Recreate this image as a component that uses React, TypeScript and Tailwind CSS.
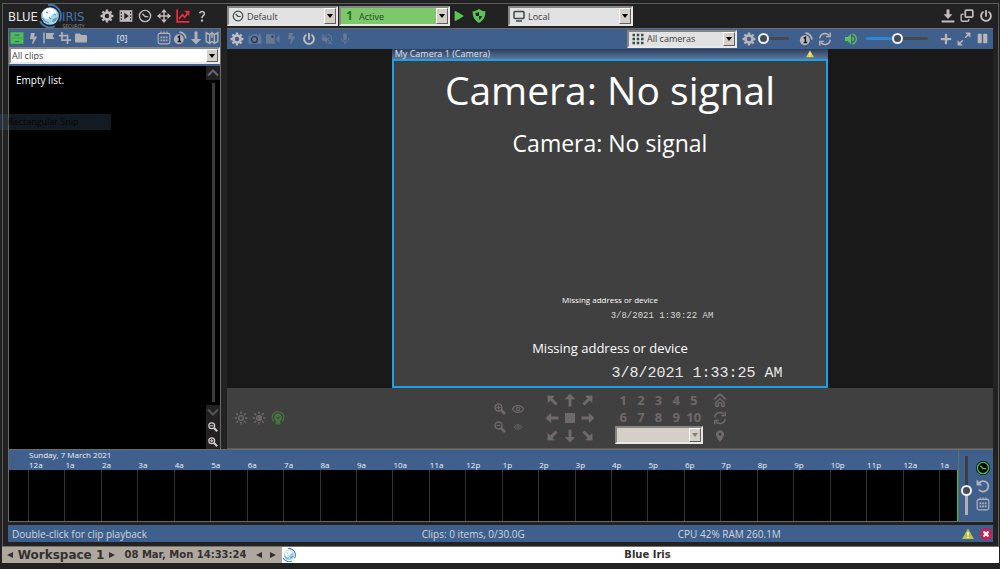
import React, { useState } from 'react';
import clsx from 'clsx';
import {
  FaBolt,
  FaFolder,
  FaPause,
  FaPlay,
  FaPlus,
  FaPowerOff,
} from 'react-icons/fa';
import {
  MdLocationOn,
  MdMic,
  MdQuestionMark,
  MdVolumeOff,
  MdVolumeUp,
} from 'react-icons/md';

interface IconButtonProps {
  label: string;
  className?: string;
  children: React.ReactNode;
}

interface PickerProps {
  label: string;
  options: string[];
  icon?: React.ReactNode;
  className?: string;
  fieldClass?: string;
  arrowClass?: string;
}

const HOURS = [
  '12a', '1a', '2a', '3a', '4a', '5a', '6a', '7a', '8a', '9a', '10a', '11a',
  '12p', '1p', '2p', '3p', '4p', '5p', '6p', '7p', '8p', '9p', '10p', '11p',
  '12a', '1a',
];

const PTZ = [
  { label: 'Up left', angle: -45 },
  { label: 'Up', angle: 0 },
  { label: 'Up right', angle: 45 },
  { label: 'Left', angle: -90 },
  { label: 'Stop', angle: null },
  { label: 'Right', angle: 90 },
  { label: 'Down left', angle: -135 },
  { label: 'Down', angle: 180 },
  { label: 'Down right', angle: 135 },
];

/* ---------- Icons ---------- */

const Svg = ({ children, className = 'w-3.5 h-3.5' }: { children: React.ReactNode; className?: string }) => (
  <svg viewBox="0 0 24 24" className={className} fill="none" stroke="currentColor" strokeWidth="2.4">
    {children}
  </svg>
);

const GearIcon = () => (
  <Svg>
    <circle cx="12" cy="12" r="6" strokeWidth="4.500" />
    <path
      d="M12 1v4M12 19v4M1 12h4M19 12h4M4.200 4.200L7 7M17 17l2.800 2.800M19.800 4.200L17 7M7 17l-2.800 2.800"
      strokeWidth="4"
    />
  </Svg>
);

const FilmIcon = () => (
  <Svg>
    <path
      fill="currentColor"
      stroke="none"
      fillRule="evenodd"
      d="M1 2h22v20H1zM3 5v3h2V5zm0 5.500v3h2v-3zM3 16v3h2v-3zM19 5v3h2V5zm0 5.500v3h2v-3zm0 5.500v3h2v-3zM9 6.500v11l8-5.500z"
    />
  </Svg>
);

const ClockIcon = ({ className }: { className?: string }) => (
  <Svg className={className}>
    <circle cx="12" cy="12" r="9.6" />
    <path d="M7.500 8l4.500 5h5.500" />
  </Svg>
);

const MoveIcon = () => (
  <Svg>
    <path d="M12 4v16M4 12h16" />
    <path fill="currentColor" stroke="none" d="M12 0l5 6H7zM12 24l5-6H7zM0 12l6-5v10zM24 12l-6-5v10z" />
  </Svg>
);

const ChartIcon = () => (
  <Svg>
    <path d="M2 1v21h21" strokeWidth="3" />
    <path d="M5 17l6-7 4 4 6-8" strokeWidth="3" />
    <path fill="currentColor" stroke="none" d="M14 3h9v9z" />
  </Svg>
);

const DrawerIcon = () => (
  <Svg>
    <path fill="currentColor" stroke="none" fillRule="evenodd" d="M1 2h22v9H1zM1 13h22v9H1zM8 6v2h8V6zm0 11v2h8v-2z" />
    <path d="M0 12h24" strokeWidth="2" />
  </Svg>
);

const FlagIcon = () => (
  <Svg className="h-3 w-3">
    <path d="M2 1v22" strokeWidth="3" />
    <path fill="currentColor" stroke="none" d="M6 2h17l-4 6 4 6H6z" />
  </Svg>
);

const CropIcon = () => (
  <Svg className="h-3 w-3">
    <path d="M6 0v16h18M0 7h17v17" strokeWidth="3.500" />
  </Svg>
);

const CalendarIcon = () => (
  <Svg>
    <rect x="2" y="4" width="20" height="18" rx="3" strokeWidth="2" />
    <path d="M7 1v4M12 1v4M17 1v4" strokeWidth="2" />
    <path d="M6 11h12M6 16h12" strokeWidth="3" strokeDasharray="3 1.500" />
  </Svg>
);

const AlertCountIcon = () => (
  <Svg>
    <circle cx="10" cy="14" r="8.500" fill="currentColor" stroke="none" />
    <path d="M11 2a11 11 0 0 1 11 11" strokeWidth="3" />
    <path d="M8 11l3-2v9M8 18h6" stroke="#111827" />
  </Svg>
);

const MapIcon = () => (
  <Svg>
    <path d="M2 3l6 3v15l-6-3zM22 3l-6 3v15l6-3zM8 6l4-3M16 6l-4-3v9M8 21l4-3 4 3" />
  </Svg>
);

const CameraIcon = () => (
  <Svg>
    <path fill="currentColor" stroke="none" d="M1 7h4l3-3h7l2 3h6v13H1z" />
    <circle cx="11" cy="13" r="5" stroke="#24385a" />
    <circle cx="20" cy="5" r="2" fill="currentColor" stroke="none" />
  </Svg>
);

const VideoIcon = () => (
  <Svg>
    <path fill="currentColor" stroke="none" d="M0 4h15v16H0zM17 12l6-7v14z" />
    <circle cx="11" cy="8" r="2" fill="#24385a" stroke="none" />
  </Svg>
);

const SyncIcon = () => (
  <Svg>
    <path d="M3 11a9 9 0 0 1 16-5M21 13a9 9 0 0 1-16 5" />
    <path d="M21 1v7h-7M3 23v-7h7" />
  </Svg>
);

const ExpandIcon = () => (
  <Svg>
    <path d="M14 10l7-7M10 14l-7 7" />
    <path fill="currentColor" stroke="none" d="M14 1h9v9zM1 14v9h9z" />
  </Svg>
);

const WindowsIcon = () => (
  <Svg>
    <rect x="9" y="2" width="13" height="12" rx="2" strokeWidth="3" />
    <path d="M6 9H4a2 2 0 0 0-2 2v8a2 2 0 0 0 2 2h9a2 2 0 0 0 2-2v-2" />
  </Svg>
);

const DownloadIcon = () => (
  <Svg>
    <path fill="currentColor" stroke="none" d="M9.500 1h5v8h5L12 17 4.500 9h5zM1 19.500h22V23H1z" />
  </Svg>
);

const ShieldIcon = () => (
  <Svg>
    <path
      fill="currentColor"
      stroke="none"
      fillRule="evenodd"
      d="M12 0c4 3 7 4 11 4 0 9-3 16-11 20C4 20 1 13 1 4c4 0 7-1 11-4zM12 5c-2 1-4 2-6 2 0 2 .3 3.500 1 5h5zM12 12v7c3-2 4.500-4 5-7z"
    />
  </Svg>
);

const MonitorIcon = () => (
  <Svg className="w-3 h-3">
    <rect x="2" y="3" width="20" height="14" rx="2" strokeWidth="3" />
    <path d="M6 22h12" strokeWidth="3" />
  </Svg>
);

const GridIcon = () => (
  <Svg className="w-3 h-3">
    <path d="M1 4h24M1 12h24M1 20h24" strokeWidth="5" strokeDasharray="5 3.500" />
  </Svg>
);

const SunIcon = ({ half }: { half?: boolean }) => (
  <Svg>
    <circle cx="12" cy="12" r="4" />
    {half && <path d="M12 8a4 4 0 0 1 0 8z" fill="currentColor" />}
    <path d="M12 1v4M12 19v4M1 12h4M19 12h4M4 4l3 3M17 17l3 3M20 4l-3 3M7 17l-3 3" />
  </Svg>
);

const BulbIcon = () => (
  <Svg className="w-4 h-4">
    <path d="M5 18a10 10 0 1 1 14 0" strokeWidth="2" />
    <path fill="currentColor" stroke="none" d="M12 4a7 7 0 0 1 4 12.500V23H8v-6.500A7 7 0 0 1 12 4z" />
    <path d="M9 10l3 3 3-3" stroke="#33503a" strokeWidth="2" />
  </Svg>
);

const EyeIcon = ({ className = 'w-3.5 h-3.5' }: { className?: string }) => (
  <Svg className={className}>
    <path d="M1 12c4-9 18-9 22 0-4 9-18 9-22 0z" />
    <circle cx="12" cy="12" r="3.500" />
  </Svg>
);

const MagnifierIcon = ({ plus, className = 'h-3 w-3' }: { plus?: boolean; className?: string }) => (
  <Svg className={className}>
    <circle cx="9" cy="9" r="7" strokeWidth="3" />
    <path d="M14 14l8 8" strokeWidth="5" />
    <path d="M5 9h8" strokeWidth="2.500" />
    {plus && <path d="M9 5v8" strokeWidth="2.500" />}
  </Svg>
);

const ArrowIcon = ({ angle }: { angle: number }) => (
  <Svg>
    <g transform={`rotate(${angle} 12 12)`}>
      <path d="M12 1l9 9.500h-6.500V23h-5V10.500H3z" fill="currentColor" stroke="none" />
    </g>
  </Svg>
);

const HomeIcon = () => (
  <Svg>
    <path d="M2 11l10-9 10 9" strokeWidth="3" />
    <path d="M4 17l8-7 8 7M5 15v8h4v-6h6v6h4v-8" />
  </Svg>
);

const UndoIcon = () => (
  <Svg>
    <path d="M5 7a9 9 0 1 1 0 11" strokeWidth="3" />
    <path fill="currentColor" stroke="none" d="M1 1v10h10z" />
  </Svg>
);

const WarningIcon = ({ className, fill = '#b8c43c' }: { className?: string; fill?: string }) => (
  <Svg className={className}>
    <path d="M12 1L24 22H0z" fill={fill} stroke="none" />
    <path d="M12 8v7M12 17v3" stroke="#fff" strokeWidth="3" />
  </Svg>
);

const Orb = ({ className }: { className?: string }) => (
  <svg viewBox="0 0 24 24" className={className}>
    <circle cx="12" cy="12" r="8.800" fill="#a9d6e4" />
    <path d="M5 8c3-5 9-5 13-1 1 3-1 3-3 3s-1 4-4 5-7-2-6-7z" fill="#f2fafb" />
    <path d="M14 18c0-3 3-4 6-5-1 3-3 5-6 5z" fill="#5b9cc2" />
    <path d="M4 14l3 3 4 2M16 10l2 1M8 8l2 1M11 13l2 2" fill="none" stroke="#5b9cc2" strokeWidth="1.200" />
    <path d="M10 .9a11.200 11.200 0 0 1 11.500 16.500M17 22.200a11.200 11.200 0 0 1-15-5" fill="none" stroke="#4676b6" strokeWidth="1.800" />
  </svg>
);

/* ---------- Controls ---------- */

function IconButton({ label, className, children }: IconButtonProps) {
  return (
    <button
      type="button"
      aria-label={label}
      title={label}
      className={clsx('flex h-3.5 w-3.5 shrink-0 items-center justify-center', className)}
    >
      {children}
    </button>
  );
}

function Picker({
  label,
  options,
  icon,
  className,
  fieldClass = 'bg-[#e1e1e1] text-[#3c3c3c]',
  arrowClass = 'text-black',
}: PickerProps) {
  return (
    <div
      className={clsx(
        'relative shrink-0 border-2 border-t-[#858585] border-l-[#858585] border-r-[#e8e8e8] border-b-[#e8e8e8]',
        className
      )}
    >
      <select
        aria-label={label}
        className={clsx('block h-full w-full appearance-none text-[9px] leading-none outline-none', icon ? 'pl-[18px]' : 'pl-px', fieldClass)}
      >
        {options.map((option) => (
          <option key={option}>{option}</option>
        ))}
      </select>
      {icon && <span className="pointer-events-none absolute inset-y-0 left-[3px] flex items-center text-[#3a4a4a]">{icon}</span>}
      <span
        className={clsx(
          'pointer-events-none absolute inset-y-0 right-0 flex w-3 items-center justify-center border border-t-white border-l-white border-r-[#606060] border-b-[#606060] bg-[#d4d0c8]',
          arrowClass
        )}
      >
        <svg viewBox="0 0 6 4" className="h-1 w-1.5" fill="currentColor">
          <path d="M0 0h6L3 4z" />
        </svg>
      </span>
    </div>
  );
}

const rangeBase =
  'appearance-none rounded-sm outline-none [&::-webkit-slider-thumb]:h-[11px] [&::-webkit-slider-thumb]:w-[11px] [&::-webkit-slider-thumb]:appearance-none [&::-webkit-slider-thumb]:rounded-full [&::-webkit-slider-thumb]:border-2 [&::-webkit-slider-thumb]:border-[#f0f0f0] [&::-webkit-slider-thumb]:bg-[#444b55]';

/* ---------- Sections ---------- */

function Logo() {
  return (
    <a
      href="#"
      aria-label="Blue Iris Security"
      className="flex w-[78px] shrink-0 items-center font-['DejaVu_Sans_Condensed','Open_Sans',sans-serif] text-[13px] leading-none"
    >
      <span className="w-[30px] text-[#e6e6e6]">BLUE</span>
      <Orb className="h-6 w-6 shrink-0" />
      <span className="relative text-[#4676b6]">
        IRIS
        <span className="absolute top-3.5 right-0 text-[5px] leading-none text-[#8a8a8a]">SECURITY</span>
      </span>
    </a>
  );
}

function TopBar() {
  return (
    <header className="flex h-6 items-center text-[#c4bcbc]">
      <div className="flex w-[219px] shrink-0 items-center gap-3.5">
        <Logo />
        <nav className="flex items-center gap-[5px]">
          <IconButton label="Settings"><GearIcon /></IconButton>
          <IconButton label="Clips"><FilmIcon /></IconButton>
          <IconButton label="Schedule"><ClockIcon /></IconButton>
          <IconButton label="Move"><MoveIcon /></IconButton>
          <IconButton label="Status" className="text-[#ee2b3b]"><ChartIcon /></IconButton>
          <IconButton label="Help"><MdQuestionMark size={14} /></IconButton>
        </nav>
      </div>
      <Picker label="Schedule" options={['Default']} icon={<ClockIcon className="h-3 w-3" />} className="h-5 w-[111px]" />
      <Picker
        label="Profile"
        options={['Active', 'Inactive']}
        icon={<span className="pl-0.5 text-[12px] font-bold text-[#1d7a1d]">1</span>}
        className="ml-px h-5 w-[111px]"
        fieldClass="bg-[#7cc86a] text-[#234a1d]"
      />
      <div className="ml-0.5 flex items-center gap-1.5 text-[#5ac455]">
        <IconButton label="Run"><FaPlay size={10} /></IconButton>
        <IconButton label="Shield"><ShieldIcon /></IconButton>
      </div>
      <Picker label="Server" options={['Local']} icon={<MonitorIcon />} className="ml-[22px] h-5 w-[125px]" />
      <div className="ml-auto flex items-center gap-[5px]">
        <IconButton label="Minimize"><DownloadIcon /></IconButton>
        <IconButton label="Restore"><WindowsIcon /></IconButton>
        <IconButton label="Exit"><FaPowerOff size={12} /></IconButton>
      </div>
    </header>
  );
}

function ClipsPanel() {
  return (
    <aside className="flex w-[213px] shrink-0 flex-col border border-b-0 border-[#6c6c6c] bg-black">
      <div className="flex h-[18px] items-center bg-[#3f608c] px-px text-[#b3afb3]">
        <div className="flex items-center gap-0.5">
          <IconButton label="All" className="text-[#4cc04f]"><DrawerIcon /></IconButton>
          <IconButton label="Alerts"><FaBolt size={11} /></IconButton>
          <IconButton label="Flagged"><FlagIcon /></IconButton>
          <IconButton label="Cropped"><CropIcon /></IconButton>
          <IconButton label="Folders"><FaFolder size={12} /></IconButton>
        </div>
        <span className="flex-1 pr-px text-center text-[9px] font-semibold text-[#d0d4dc]">[0]</span>
        <div className="flex items-center gap-0.5">
          <IconButton label="Calendar"><CalendarIcon /></IconButton>
          <IconButton label="Count"><AlertCountIcon /></IconButton>
          <IconButton label="Sort"><ArrowIcon angle={180} /></IconButton>
          <IconButton label="Map"><MapIcon /></IconButton>
        </div>
      </div>
      <div className="border-b-2 border-[#3f608c] bg-[#3f608c]">
        <Picker label="Clip filter" options={['All clips']} className="h-[17px]" fieldClass="bg-white text-[#444]" />
      </div>
      <div className="flex flex-1">
        <p className="flex-1 px-[7px] pt-1.5 text-[10px] leading-4 text-white">Empty list.</p>
        <div className="flex w-3.5 flex-col items-center text-[#666]">
          <button type="button" aria-label="Scroll up" className="flex h-3.5 w-full items-center justify-center bg-[#222]">
            <Svg className="h-3 w-3"><path d="M2 17L12 7l10 10" strokeWidth="4" /></Svg>
          </button>
          <div className="my-[3px] w-[3px] flex-1 bg-[#3c3c3c]" />
          <div className="flex w-full flex-col items-center gap-px bg-[#222] text-[#d5cdcd]">
            <button type="button" aria-label="Scroll down" className="flex h-3.5 items-center text-[#555]">
              <Svg className="h-3 w-3"><path d="M2 7l10 10L22 7" strokeWidth="4" /></Svg>
            </button>
            <IconButton label="Smaller"><MagnifierIcon className="h-2.5 w-2.5" /></IconButton>
            <IconButton label="Larger"><MagnifierIcon plus className="h-2.5 w-2.5" /></IconButton>
          </div>
        </div>
      </div>
    </aside>
  );
}

function CameraToolbar() {
  const [size, setSize] = useState(0);
  const [volume, setVolume] = useState(50);

  return (
    <div className="flex h-[21px] items-center border-t border-[#6c6c6c] bg-[#3f608c] pr-1 pb-px pl-[3px] text-[#bdb5b5]">
      <div className="flex items-center gap-1 text-[#6c7894]">
        <IconButton label="Camera settings" className="text-[#c4bcbc]"><GearIcon /></IconButton>
        <IconButton label="Snapshot"><CameraIcon /></IconButton>
        <IconButton label="Record"><VideoIcon /></IconButton>
        <IconButton label="Trigger"><FaBolt size={11} /></IconButton>
        <IconButton label="Enable" className="text-[#c4bcbc]"><FaPowerOff size={12} /></IconButton>
        <IconButton label="Mute"><MdVolumeOff size={14} /></IconButton>
        <IconButton label="Talk"><MdMic size={14} /></IconButton>
      </div>
      <Picker label="Camera group" options={['All cameras']} icon={<GridIcon />} className="ml-auto h-[18px] w-[110px]" />
      <IconButton label="Layout" className="ml-[5px]"><GearIcon /></IconButton>
      <input
        type="range"
        aria-label="Frame size"
        value={size}
        onChange={(e) => setSize(Number(e.target.value))}
        className={clsx(rangeBase, 'ml-0.5 h-[3px] w-[31px] bg-[#46494e]')}
      />
      <div className="ml-2.5 flex gap-[5px]">
        <IconButton label="Alerts"><AlertCountIcon /></IconButton>
        <IconButton label="Cycle"><SyncIcon /></IconButton>
      </div>
      <IconButton label="Sound" className="ml-3 text-[#5ac455]"><MdVolumeUp size={16} className="shrink-0" /></IconButton>
      <input
        type="range"
        aria-label="Volume"
        value={volume}
        onChange={(e) => setVolume(Number(e.target.value))}
        className={clsx(rangeBase, 'ml-2 h-[3px] w-[62px] bg-[linear-gradient(to_right,#2f86d2_50%,#46494e_50%)]')}
      />
      <div className="ml-[11px] flex gap-1">
        <IconButton label="Add camera"><FaPlus size={12} /></IconButton>
        <IconButton label="Full screen"><ExpandIcon /></IconButton>
        <IconButton label="Pause"><FaPause size={11} /></IconButton>
      </div>
    </div>
  );
}

function CameraView() {
  return (
    <div className="flex flex-1 justify-center bg-[#191919]">
      <section className="flex w-[57%] flex-col">
        <div className="flex h-[10px] items-center justify-between bg-linear-to-b from-[#2b3f60] to-[#5f7699] pr-3.5 pl-[3px]">
          <h2 className="text-[9px] leading-[10px] text-[#dfe5ee]">My Camera 1 (Camera)</h2>
          <WarningIcon className="h-2 w-2" fill="#d9d03a" />
        </div>
        <div className="flex flex-1 flex-col items-center border-2 border-[#1ca0e8] bg-[#404040] text-white">
          <p className="text-[39px] leading-[58px]">Camera: No signal</p>
          <p className="mt-1.5 text-[23px] leading-9">Camera: No signal</p>
          <div className="mt-auto flex flex-col items-center">
            <p className="text-[8px] leading-3">Missing address or device</p>
            <p className="pt-0.5 pl-[104px] font-['Liberation_Mono',monospace] text-[9px] leading-4 text-[#d8d8d8]">3/8/2021 1:30:22 AM</p>
            <p className="mt-3 text-[13px] leading-6">Missing address or device</p>
            <p className="pt-0.5 pl-[174px] font-['Liberation_Mono',monospace] text-[15px] leading-6 text-[#e8e8e8]">3/8/2021 1:33:25 AM</p>
          </div>
        </div>
      </section>
    </div>
  );
}

function PtzPanel() {
  return (
    <div className="flex h-[61px] items-center border-b border-[#5c5c5c] bg-[#404040] text-[#6f6969]">
      <div className="flex flex-1 items-center gap-1 pl-[7px]">
        <IconButton label="Brightness"><SunIcon /></IconButton>
        <IconButton label="Contrast"><SunIcon half /></IconButton>
        <IconButton label="IR light" className="ml-px text-[#44763f]"><BulbIcon /></IconButton>
      </div>
      <div className="flex items-center">
        <div className="grid grid-cols-2 gap-1">
          <IconButton label="Zoom in"><MagnifierIcon plus /></IconButton>
          <IconButton label="Focus far"><EyeIcon className="h-3 w-3" /></IconButton>
          <IconButton label="Zoom out"><MagnifierIcon /></IconButton>
          <IconButton label="Focus near"><EyeIcon className="h-2 w-2" /></IconButton>
        </div>
        <div className="ml-5 grid grid-cols-3 gap-1">
          {PTZ.map(({ label, angle }) => (
            <IconButton key={label} label={label}>
              {angle === null ? <span className="h-2.5 w-2.5 bg-current" /> : <ArrowIcon angle={angle} />}
            </IconButton>
          ))}
        </div>
        <div className="ml-5 w-[88px]">
          <div className="grid grid-cols-5 text-[13px] leading-[17px] font-bold">
            {[1, 2, 3, 4, 5, 6, 7, 8, 9, 10].map((n) => (
              <button type="button" key={n}>{n}</button>
            ))}
          </div>
          <Picker label="Preset" options={['']} className="h-[18px]" fieldClass="bg-[#d4d0c8]" arrowClass="text-[#808080]" />
        </div>
        <div className="ml-2.5 flex flex-col gap-1">
          <IconButton label="Home"><HomeIcon /></IconButton>
          <IconButton label="Patrol"><SyncIcon /></IconButton>
          <IconButton label="Position"><MdLocationOn size={14} /></IconButton>
        </div>
      </div>
      <div className="flex-1 pr-2" />
    </div>
  );
}

function Timeline() {
  const [zoom, setZoom] = useState(40);

  return (
    <div className="flex h-[73px] border-y border-l border-[#6c6c6c] bg-[#3f608c] text-[#eef1f6]">
      <div className="flex min-w-0 flex-1 flex-col border-r border-[#6c6c6c]">
        <p className="pl-5 text-[8px] leading-[10px]">Sunday, 7 March 2021</p>
        <div className="flex flex-1">
          <div className="flex w-[19px] shrink-0 flex-col">
            <div className="h-2.5" />
            <div className="flex-1 bg-black" />
          </div>
          {HOURS.map((hour, i) => (
            <div key={i} className={clsx('flex min-w-0 flex-col', i === HOURS.length - 1 ? 'grow basis-0' : 'grow-[2] basis-0')}>
              <span className="h-2.5 pl-px text-[8px] leading-[10px]">{hour}</span>
              <div className="flex-1 border-l border-[#333] bg-black" />
            </div>
          ))}
          <div className="mt-2.5 w-px bg-[#19c84a]" />
        </div>
      </div>
      <div className="flex w-[34px] items-center justify-between pr-[3px] pl-0.5">
        <input
          type="range"
          aria-label="Timeline zoom"
          value={zoom}
          onChange={(e) => setZoom(Number(e.target.value))}
          className={clsx(
            rangeBase,
            'h-[59px] w-[11px] bg-[linear-gradient(to_bottom,#3a3d42_60%,#b5adad_60%)] bg-[length:3px_100%] bg-center bg-no-repeat [direction:rtl] [writing-mode:vertical-lr]'
          )}
        />
        <div className="flex flex-col gap-1 text-[#b5b2b6]">
          <IconButton label="Now" className="rounded-full bg-black text-[#4cc04f]"><ClockIcon /></IconButton>
          <IconButton label="Back"><UndoIcon /></IconButton>
          <IconButton label="Pick date"><CalendarIcon /></IconButton>
        </div>
      </div>
    </div>
  );
}

function StatusBar() {
  return (
    <footer className="mt-[3px] flex h-[17px] items-center bg-[#3f608c] text-[10px] leading-none text-[#cfd5de]">
      <span className="w-[42%] pl-1">Double-click for clip playback</span>
      <span className="w-[26%]">Clips: 0 items, 0/30.0G</span>
      <span>CPU 42% RAM 260.1M</span>
      <div className="ml-auto flex gap-1">
        <IconButton label="Warnings"><WarningIcon className="h-3 w-3" /></IconButton>
        <IconButton label="Errors">
          <Svg className="h-3 w-3">
            <circle cx="12" cy="12" r="12" fill="#d8174e" stroke="none" />
            <path d="M7 7l10 10M17 7L7 17" stroke="#fff" strokeWidth="4.500" />
          </Svg>
        </IconButton>
      </div>
    </footer>
  );
}

function Triangle({ label, left }: { label: string; left?: boolean }) {
  return (
    <button type="button" aria-label={label} className="shrink-0">
      <svg viewBox="0 0 6 6" className="h-1.5 w-1.5" fill="currentColor">
        <path d={left ? 'M6 0v6L0 3z' : 'M0 0v6l6-3z'} />
      </svg>
    </button>
  );
}

function Taskbar() {
  return (
    <div className="flex h-[17px] items-stretch border-t border-[#77736c] bg-[#aea89f] font-['DejaVu_Sans',sans-serif] text-[10px] leading-4 font-bold text-[#33312e]">
      <div className="flex w-[280px] shrink-0 items-center pl-[5px] whitespace-nowrap">
        <Triangle label="Previous workspace" left />
        <span className="w-[96px] text-center text-[12px]">Workspace 1</span>
        <Triangle label="Next workspace" />
        <span className="w-[141px] text-center">08 Mar, Mon 14:33:24</span>
        <Triangle label="Previous window" left />
        <span className="w-2" />
        <Triangle label="Next window" />
      </div>
      <button type="button" className="flex flex-1 items-center bg-white">
        <Orb className="h-3.5 w-3.5" />
        <span className="flex-1 text-center">Blue Iris</span>
      </button>
    </div>
  );
}

export default function App() {
  return (
    <div className="relative flex min-h-screen flex-col bg-[#222] pt-[3px] pr-px pb-1.5 pl-0.5 font-['Open_Sans','Noto_Sans',sans-serif]">
      <main className="flex flex-1 flex-col border border-b-0 border-[#5c5c5c] px-[5px] pb-1">
        <TopBar />
        <div className="flex flex-1 gap-1.5">
          <ClipsPanel />
          <div className="flex min-w-0 flex-1 flex-col">
            <CameraToolbar />
            <CameraView />
            <PtzPanel />
          </div>
        </div>
        <Timeline />
        <StatusBar />
      </main>
      <Taskbar />
      {/* Leftover tooltip floating over the clip list */}
      <div className="absolute top-[114px] left-0 w-[111px] bg-[#3c5a78]/30 pl-2 text-[9px] leading-4 text-[#050505]">Rectangular Snip</div>
    </div>
  );
}
